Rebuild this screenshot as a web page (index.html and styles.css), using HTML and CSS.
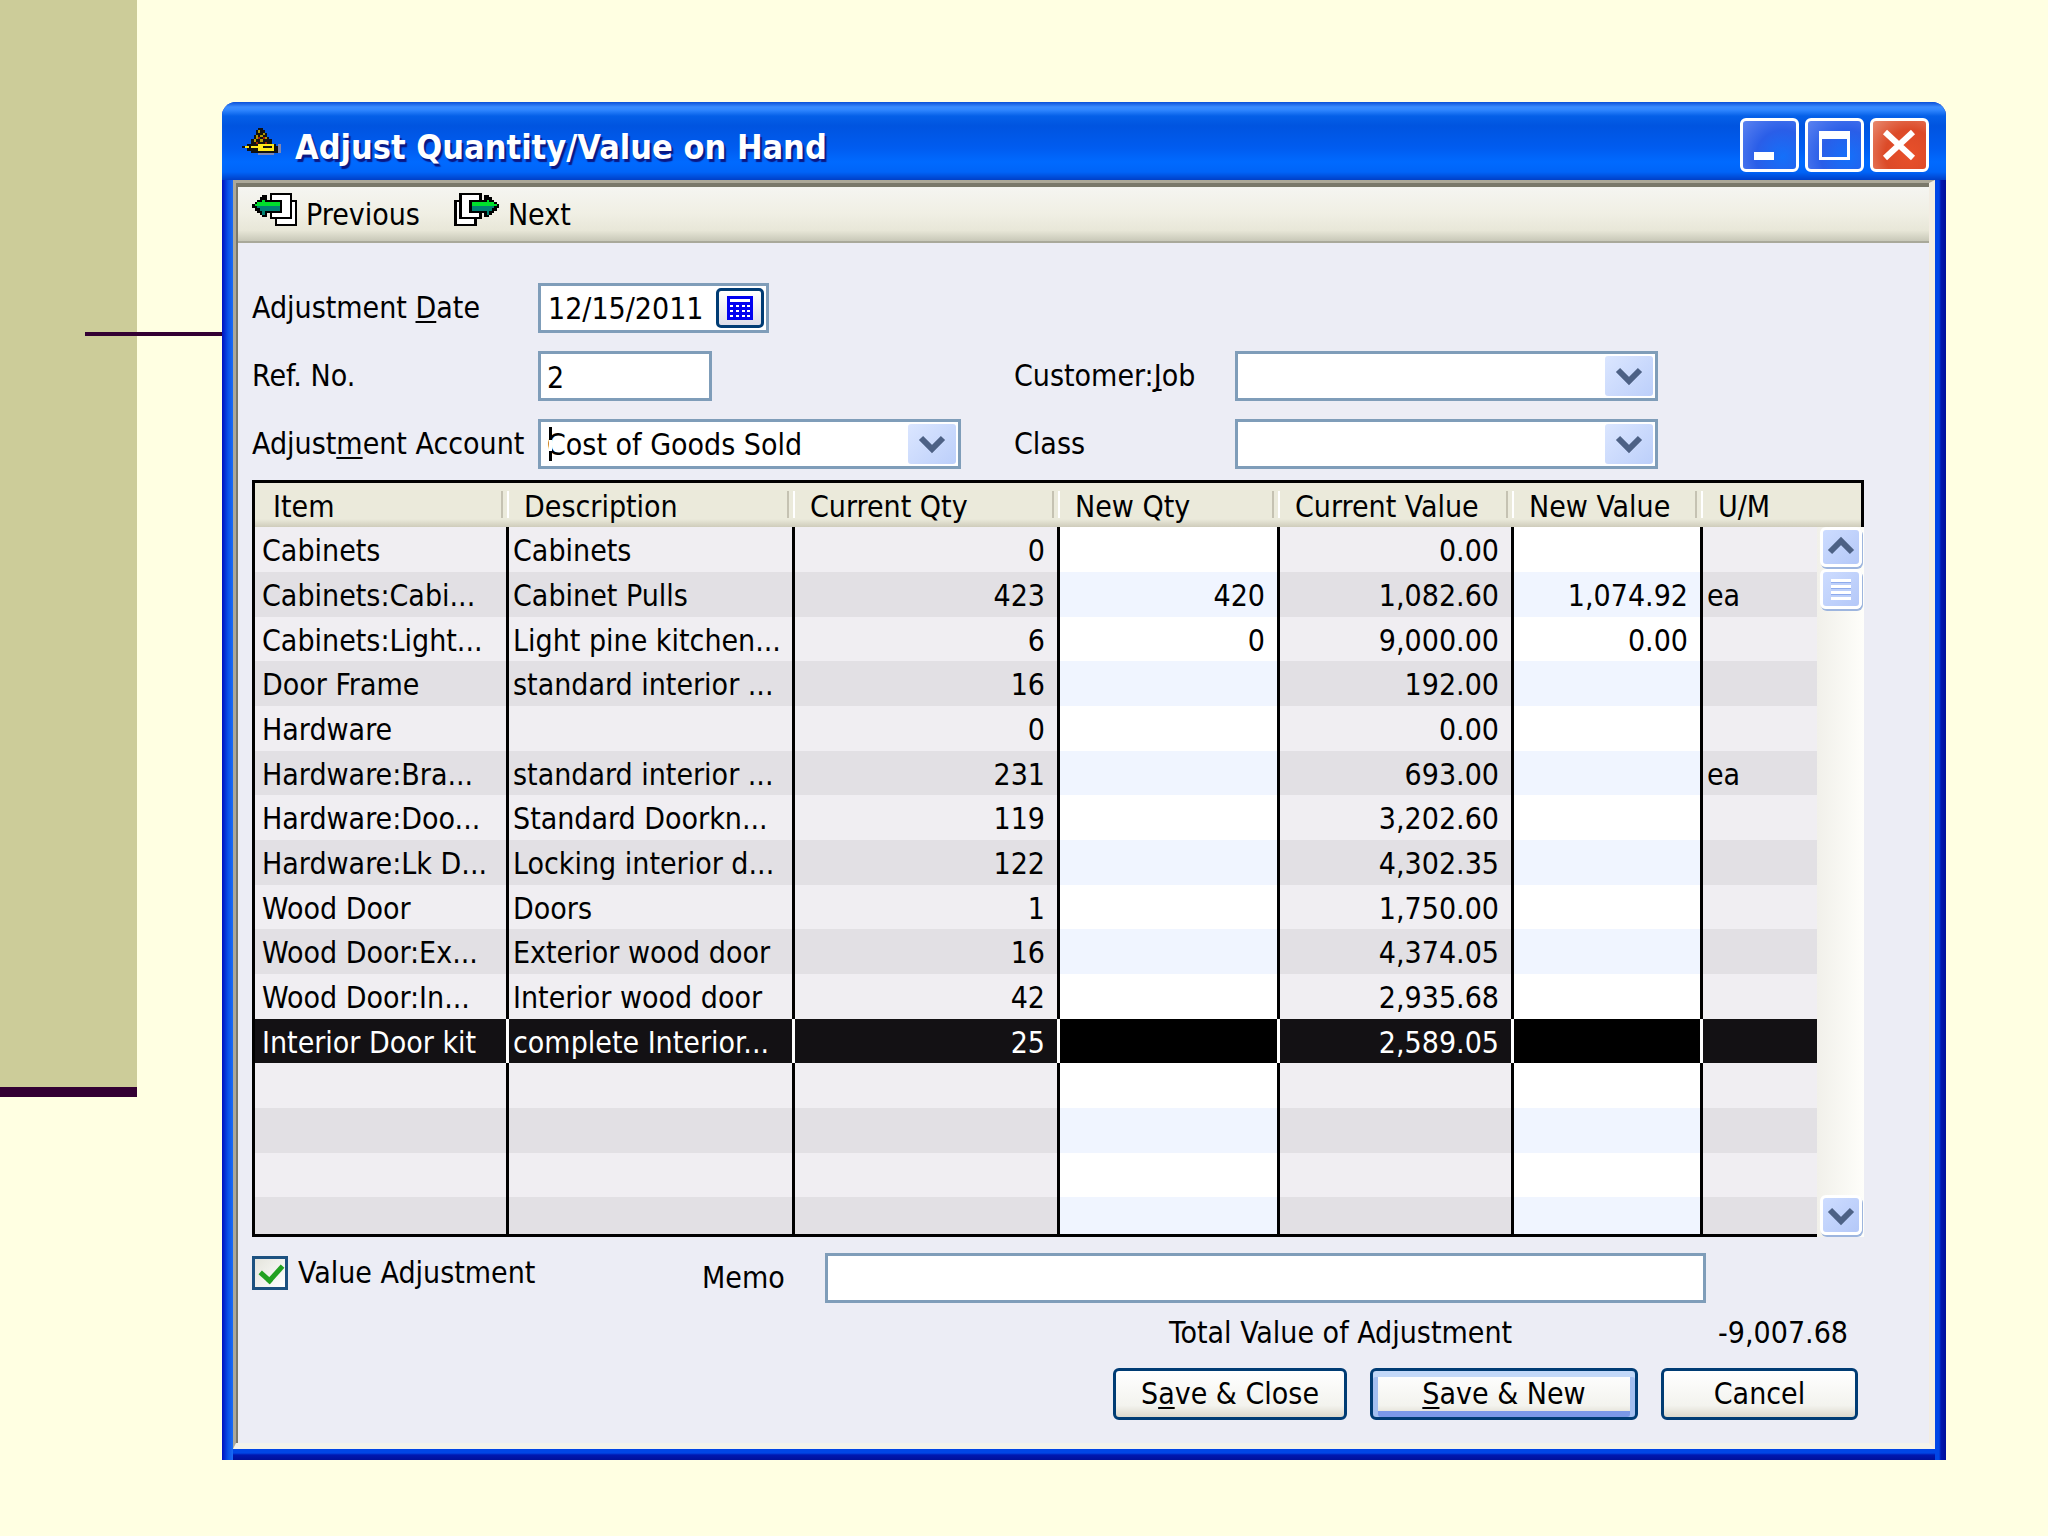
FILE: index.html
```
<!DOCTYPE html>
<html lang="en">
<head>
  <meta charset="UTF-8">
  <meta name="viewport" content="width=device-width, initial-scale=1.0">
  <title>Adjust Quantity/Value on Hand</title>
  <link rel="stylesheet" href="styles.css">
</head>
<body>

<aside class="side-band"></aside>

<main class="window">
  <header class="title-bar">
    <svg class="title-icon" viewBox="0 0 17 12" shape-rendering="crispEdges">
      <path fill="#111" d="M7 0h2v1h1v1h1v2h1v1h1v2h2v1h1v3h-2v1H7v-1H4v-1H2V9H0V8h2V7h2V5h1V3h1V1h1z"/>
      <path fill="#b09800" d="M7 1h1v1H7zM9 2h1v1H9zM6 3h1v2H6zM8 3h1v1H8zM5 5h1v1H5zM10 4h1v1h-1zM8 5h1v1H8z"/>
      <path fill="#a01c00" d="M7 4h1v1H7zM9 4h1v1H9zM6 6h1v1H6zM10 6h1v1h-1z"/>
      <path fill="#ffe81a" d="M1 8h2v1H1zM4 8h3v1H4zM7 7h7v1H7zM7 9h7v1H7zM7 8h2v1H7zM13 8h1v1h-1z"/>
      <path fill="#7f86b0" d="M16 7h1v4h-1zM7 11h7v1H7z"/>
    </svg>
    <h1>Adjust Quantity/Value on Hand</h1>
    <div class="window-buttons">
      <button type="button" aria-label="Minimize"><svg viewBox="0 0 53 48"><path fill="#fff" d="M11 31h20v8H11z"/></svg></button>
      <button type="button" aria-label="Maximize"><svg viewBox="0 0 53 48"><path fill="#fff" fill-rule="evenodd" d="M11 10h31v29H11zM14 18v18h25V18z"/></svg></button>
      <button type="button" class="close" aria-label="Close"><svg viewBox="0 0 53 48"><path stroke="#fff" stroke-width="6" d="M12 11l28 26M40 11L12 37"/></svg></button>
    </div>
  </header>

  <div class="client">
    <nav class="toolbar">
      <button type="button">
        <svg viewBox="0 0 18 15" preserveAspectRatio="none" shape-rendering="crispEdges">
          <path fill="#fff" stroke="#000" d="M9.500 3.500h8v11h-8z"/>
          <path fill="#fff" stroke="#000" d="M7.500.5h8v11h-8z"/>
          <path fill="#000" d="M4 1h2v2h5v6H6v2H4v-1H3V9H2V8H1V7H0V5h1V4h1V3h1V2h1z"/>
          <path fill="#00e02c" d="M4 3h1v1h6v1H1V5h1V4h2z"/>
          <path fill="#00e02c" d="M1 5h10v1H1z"/>
          <path fill="#008272" d="M2 6h9v2H5v2H4V8H3V7H2z"/>
          <path fill="#000" d="M11 3h1v6h-1z"/>
        </svg>
        Previous
      </button>
      <button type="button">
        <svg viewBox="0 0 18 15" preserveAspectRatio="none" shape-rendering="crispEdges">
          <g transform="matrix(-1 0 0 1 18 0)">
            <path fill="#fff" stroke="#000" d="M9.500 3.500h8v11h-8z"/>
            <path fill="#fff" stroke="#000" d="M7.500.5h8v11h-8z"/>
            <path fill="#000" d="M4 1h2v2h5v6H6v2H4v-1H3V9H2V8H1V7H0V5h1V4h1V3h1V2h1z"/>
            <path fill="#00e02c" d="M4 3h1v1h6v1H1V5h1V4h2z"/>
            <path fill="#00e02c" d="M1 5h10v1H1z"/>
            <path fill="#008272" d="M2 6h9v2H5v2H4V8H3V7H2z"/>
            <path fill="#000" d="M11 3h1v6h-1z"/>
          </g>
        </svg>
        Next
      </button>
    </nav>

    <form class="content">
      <div class="fields">
        <label for="date">Adjustment <u>D</u>ate</label>
        <div class="box date-box">
          <input id="date" type="text" value="12/15/2011">
          <button type="button" class="calendar" aria-label="Pick a date">
            <svg viewBox="0 0 26 24" shape-rendering="crispEdges">
              <path fill="#0000f0" d="M0 0h26v24H0z"/>
              <path fill="#fff" d="M3 3h20v3H3zM3 9h3v2H3zM9 9h3v2H9zM15 9h3v2h-3zM20 9h3v2h-3zM3 14h3v2H3zM9 14h3v2H9zM15 14h3v2h-3zM20 14h3v2h-3zM3 19h3v2H3zM9 19h3v2H9zM15 19h3v2h-3zM20 19h3v2h-3z"/>
            </svg>
          </button>
        </div>

        <label for="ref" class="row-start">Ref. No.</label>
        <input id="ref" class="box ref-box" type="text" value="2">
        <label for="job" class="second">Customer:<u>J</u>ob</label>
        <div class="box select-box">
          <select id="job"><option></option></select>
          <svg class="arrow" viewBox="0 0 48 40"><path d="M13 14l11 11 11-11"/></svg>
        </div>

        <label for="account" class="row-start">Adjust<u>m</u>ent Account</label>
        <div class="box select-box">
          <select id="account"><option>Cost of Goods Sold</option></select>
          <svg class="arrow" viewBox="0 0 48 40"><path d="M13 14l11 11 11-11"/></svg>
          <span class="caret"></span>
        </div>
        <label for="class" class="second">Class</label>
        <div class="box select-box">
          <select id="class"><option></option></select>
          <svg class="arrow" viewBox="0 0 48 40"><path d="M13 14l11 11 11-11"/></svg>
        </div>
      </div>

      <div class="grid">
        <table>
          <colgroup>
            <col class="c-item"><col><col class="c-qty"><col class="c-newqty"><col class="c-value"><col class="c-newvalue"><col class="c-um">
          </colgroup>
          <thead>
            <tr><th>Item</th><th>Description</th><th>Current Qty</th><th>New Qty</th><th>Current Value</th><th>New Value</th><th>U/M</th></tr>
          </thead>
          <tbody>
            <tr><td>Cabinets</td><td>Cabinets</td><td>0</td><td></td><td>0.00</td><td></td><td></td></tr>
            <tr><td>Cabinets:Cabi...</td><td>Cabinet Pulls</td><td>423</td><td>420</td><td>1,082.60</td><td>1,074.92</td><td>ea</td></tr>
            <tr><td>Cabinets:Light...</td><td>Light pine kitchen...</td><td>6</td><td>0</td><td>9,000.00</td><td>0.00</td><td></td></tr>
            <tr><td>Door Frame</td><td>standard interior ...</td><td>16</td><td></td><td>192.00</td><td></td><td></td></tr>
            <tr><td>Hardware</td><td></td><td>0</td><td></td><td>0.00</td><td></td><td></td></tr>
            <tr><td>Hardware:Bra...</td><td>standard interior ...</td><td>231</td><td></td><td>693.00</td><td></td><td>ea</td></tr>
            <tr><td>Hardware:Doo...</td><td>Standard Doorkn...</td><td>119</td><td></td><td>3,202.60</td><td></td><td></td></tr>
            <tr><td>Hardware:Lk D...</td><td>Locking interior d...</td><td>122</td><td></td><td>4,302.35</td><td></td><td></td></tr>
            <tr><td>Wood Door</td><td>Doors</td><td>1</td><td></td><td>1,750.00</td><td></td><td></td></tr>
            <tr><td>Wood Door:Ex...</td><td>Exterior wood door</td><td>16</td><td></td><td>4,374.05</td><td></td><td></td></tr>
            <tr><td>Wood Door:In...</td><td>Interior wood door</td><td>42</td><td></td><td>2,935.68</td><td></td><td></td></tr>
            <tr class="selected"><td>Interior Door kit</td><td>complete Interior...</td><td>25</td><td></td><td>2,589.05</td><td></td><td></td></tr>
            <tr><td></td><td></td><td></td><td></td><td></td><td></td><td></td></tr>
            <tr><td></td><td></td><td></td><td></td><td></td><td></td><td></td></tr>
            <tr><td></td><td></td><td></td><td></td><td></td><td></td><td></td></tr>
            <tr class="cut"><td></td><td></td><td></td><td></td><td></td><td></td><td></td></tr>
          </tbody>
        </table>
        <div class="scroll">
          <div class="scroll-head"></div>
          <div class="scroll-bar">
            <button type="button" aria-label="Scroll up"><svg viewBox="0 0 36 34"><path d="M7 22l11-11 11 11"/></svg></button>
            <div class="thumb"></div>
            <button type="button" class="down" aria-label="Scroll down"><svg viewBox="0 0 36 34"><path d="M7 12l11 11 11-11"/></svg></button>
          </div>
        </div>
      </div>

      <div class="memo-row">
        <label class="check"><input type="checkbox" checked> Value Adjustment</label>
        <label for="memo" class="memo-label">Memo</label>
        <input id="memo" class="box" type="text">
      </div>

      <div class="total">
        <span>Total Value of Adjustment</span>
        <output>-9,007.68</output>
      </div>

      <div class="actions">
        <button type="button" class="save-close">S<u>a</u>ve &amp; Close</button>
        <button type="button" class="save-new"><u>S</u>ave &amp; New</button>
        <button type="button" class="cancel">Cancel</button>
      </div>
    </form>
  </div>
</main>

</body>
</html>
```
FILE: styles.css
```
:root {
  --page: #ffffe2;
  --panel: #ecedf5;
  --chrome: #ebeadb;
  --field-border: #7f9db9;
  --button-border: #003c74;
  --arrow: #4d6185;
}

* {
  margin: 0;
  padding: 0;
  box-sizing: border-box;
}

body {
  position: relative;
  min-height: 100vh;
  display: flex;
  align-items: flex-start;
  background: var(--page);
  font-family: Tahoma, "DejaVu Sans Condensed", sans-serif;
  font-size: 30px;
  line-height: 36px;
  color: #000;
}

input, select, button {
  font: inherit;
  color: inherit;
}

button {
  border: none;
  background: none;
}

u {
  text-underline-offset: 3px;
  text-decoration-thickness: 2px;
  text-decoration-skip-ink: none;
}

/* slide decoration */
.side-band {
  width: 137px;
  height: 1097px;
  flex: none;
  background: #cccc99;
  border-bottom: 10px solid #330033;
}

body::before {
  content: "";
  position: absolute;
  left: 85px;
  top: 332px;
  width: 140px;
  height: 4px;
  background: #330033;
}

/* window */
.window {
  position: relative;
  flex: 1;
  min-width: 0;
  margin: 102px 102px 76px 85px;
  padding: 0 11px 11px;
  border-radius: 14px 14px 0 0;
  background:
    linear-gradient(90deg, #0010c0, #0a50e8 6px, #1a6cf5 11px, transparent 11px),
    linear-gradient(270deg, #00109a, #0018b0 5px, #0046e6 7px, #0046e6 11px, transparent 11px),
    linear-gradient(0deg, #00109a, #0018b0 5px, #0046e6 7px);
}

.title-bar {
  height: 78px;
  margin: 0 -11px;
  padding: 0 17px 0 20px;
  display: flex;
  align-items: center;
  border-radius: 14px 14px 0 0;
  background: linear-gradient(#0a50d8, #3a8cff 5px, #2f86ff 8px, #0560e8 14px, #0054e0 24px, #005cf0 46px, #006aff 60px, #0064f8 70px, #0040c8);
}

.title-icon {
  width: 39px;
  height: 27px;
  margin-right: 14px;
}

h1 {
  flex: 1;
  padding-top: 12px;
  font-size: 34px;
  line-height: 40px;
  font-weight: bold;
  color: #fff;
  text-shadow: 2px 3px 1px #0a1883;
}

.window-buttons {
  display: flex;
  gap: 6px;
  margin-top: 8px;
}

.window-buttons button {
  width: 59px;
  height: 54px;
  border: 3px solid #fff;
  border-radius: 6px;
  background: radial-gradient(circle at 75% 75%, #1470fa, #2a5ee8 50%, #5b82f0);
}

.window-buttons .close {
  background: radial-gradient(circle at 70% 70%, #e8502a, #dc4a28 50%, #e88a70);
}

.window-buttons svg {
  display: block;
}

.client {
  border-style: solid;
  border-width: 3px 6px 6px 3px;
  border-color: #aca899 #f3ede2 #f4f3ea #aca899;
  background: var(--panel);
  box-shadow: inset 2px 4px #7a786a;
}

.toolbar {
  height: 60px;
  margin-left: 2px;
  padding: 0 14px;
  display: flex;
  gap: 34px;
  border-top: 4px solid #7a786a;
  border-bottom: 2px solid #a9a99a;
  background: linear-gradient(#f5f5f1, #f0efe4 50%, #e8e7d8 80%, #c8c8b8);
}

.toolbar button {
  display: flex;
  gap: 9px;
  padding-top: 6px;
  line-height: 44px;
}

.toolbar svg {
  width: 45px;
  height: 33px;
}

.content {
  padding: 40px 65px 23px 16px;
}

/* form fields */
.fields {
  display: grid;
  grid-template-columns: 286px 423px 274px 423px;
  row-gap: 18px;
  align-items: center;
}

.row-start {
  grid-column: 1;
}

.second {
  padding-left: 53px;
}

.box {
  height: 50px;
  border: 3px solid var(--field-border);
  background: #fff;
}

input.box {
  padding: 2px 6px 0;
}

.date-box {
  width: 231px;
  display: flex;
  align-items: center;
}

.date-box input {
  width: 175px;
  padding: 2px 0 0 7px;
  border: none;
  background: none;
}

.calendar {
  width: 48px;
  height: 40px;
  border: 3px solid var(--button-border);
  border-radius: 5px;
  background: linear-gradient(#fff, #dcdce8);
  display: flex;
  align-items: center;
  justify-content: center;
}

.calendar svg {
  width: 26px;
  height: 24px;
  flex: none;
}

.ref-box {
  width: 174px;
}

.select-box {
  position: relative;
}

.select-box select {
  width: 100%;
  height: 100%;
  padding: 2px 0 0 6px;
  border: none;
  background: none;
  appearance: none;
}

.arrow {
  position: absolute;
  right: 2px;
  top: 2px;
  width: 48px;
  height: 40px;
  border-radius: 3px;
  background: linear-gradient(135deg, #dbe6ff, #bccffa);
  pointer-events: none;
}

.arrow path,
.scroll-bar path {
  fill: none;
  stroke: var(--arrow);
  stroke-width: 6;
}

/* text cursor left over the account name */
.caret {
  position: absolute;
  left: 8px;
  top: 5px;
  width: 3px;
  height: 34px;
  background: linear-gradient(#000 13px, #fff 13px, #fff 24px, #000 24px);
}

/* item grid */
.grid {
  display: flex;
  margin-top: 11px;
}

table {
  flex: 1;
  min-width: 0;
  table-layout: fixed;
  border-collapse: separate;
  border-spacing: 0;
  border: 3px solid #000;
  border-right: none;
}

.c-item { width: 254px; }
.c-qty { width: 265px; }
.c-newqty { width: 220px; }
.c-value { width: 234px; }
.c-newvalue { width: 189px; }
.c-um { width: 114px; }

th,
.scroll-head {
  height: 44px;
  background: linear-gradient(var(--chrome) 36px, #cfccbb);
}

th {
  position: relative;
  padding: 4px 0 0 15px;
  font-weight: normal;
  text-align: left;
  white-space: nowrap;
}

th:first-child {
  padding-left: 18px;
}

th:not(:last-child)::after {
  content: "";
  position: absolute;
  right: 0;
  top: 8px;
  width: 4px;
  height: 27px;
  border-left: 2px solid #c5c2b2;
  border-right: 2px solid #fff;
}

td {
  height: 45px;
  padding: 3px 0 0 4px;
  border-right: 3px solid #000;
  background: #f0eef2;
  white-space: nowrap;
  overflow: hidden;
}

tr:nth-child(3n) td {
  height: 44px;
}

tr.cut td {
  height: 37px;
}

td:first-child {
  padding-left: 7px;
}

td:nth-child(n+3):nth-child(-n+6) {
  padding-right: 12px;
  text-align: right;
}

td:last-child {
  border-right: none;
}

tr:nth-child(even) td {
  background: #e2e0e4;
}

td:nth-child(4),
td:nth-child(6) {
  background: #fff;
}

tr:nth-child(even) td:nth-child(4),
tr:nth-child(even) td:nth-child(6) {
  background: #f0f5ff;
}

tbody tr.selected td {
  background: #131114;
  border-right-color: #fff;
  color: #fff;
}

tbody tr.selected td:nth-child(4),
tbody tr.selected td:nth-child(6) {
  background: #000;
}

.scroll {
  width: 47px;
  display: flex;
  flex-direction: column;
}

.scroll-head {
  height: 47px;
  flex: none;
  border-top: 3px solid #000;
  border-right: 3px solid #000;
}

.scroll-bar {
  flex: 1;
  display: flex;
  flex-direction: column;
  padding: 0 2px 2px 3px;
  background: linear-gradient(90deg, #f1f0ea, #fefefa);
}

.scroll-bar button,
.thumb {
  height: 40px;
  border: 3px solid #fff;
  border-radius: 6px;
  background: linear-gradient(135deg, #cddcff, #b4c8f8);
  box-shadow: 1px 2px 0 #9db5de;
}

.scroll-bar svg {
  display: block;
  width: 36px;
  height: 34px;
}

.thumb {
  margin-top: 2px;
  padding: 7px 8px;
}

.thumb::before {
  content: "";
  display: block;
  height: 21px;
  background: repeating-linear-gradient(#fff 0 3px, #8fabec 3px 4px, #bccffa 4px 6px);
}

.scroll-bar .down {
  margin-top: auto;
}

/* below the grid */
.memo-row {
  display: flex;
  align-items: flex-start;
  margin-top: 16px;
}

.check {
  width: 450px;
  display: flex;
  align-items: center;
  gap: 10px;
  padding-top: 2px;
}

.check input {
  appearance: none;
  width: 36px;
  height: 34px;
  border: 3px solid #1c5180;
  background: linear-gradient(135deg, #e4e4dc, #fff);
}

.check input:checked::before {
  content: "";
  display: block;
  width: 10px;
  height: 17px;
  margin: 1px 0 0 9px;
  border: solid #21a121;
  border-width: 0 5px 5px 0;
  transform: rotate(42deg);
}

.memo-label {
  width: 123px;
  align-self: center;
}

.memo-row .box {
  flex: 1;
  min-width: 0;
  margin-right: 158px;
}

.total {
  display: flex;
  justify-content: flex-end;
  align-items: center;
  gap: 206px;
  margin-top: 12px;
  padding-right: 16px;
}

.actions {
  display: flex;
  justify-content: flex-end;
  gap: 23px;
  margin-top: 17px;
  padding-right: 6px;
}

.actions button {
  height: 52px;
  border: 3px solid var(--button-border);
  border-radius: 6px;
  background: linear-gradient(#fff, #f3f3ee 75%, #dcd8cc);
}

.actions .save-close {
  width: 234px;
}

.actions .save-new {
  width: 268px;
  box-shadow: inset 0 6px #c2d8f8, inset 5px 0 #a4bff0, inset -5px 0 #a4bff0, inset 0 -6px #7b98e8;
}

.actions .cancel {
  width: 197px;
}
```
